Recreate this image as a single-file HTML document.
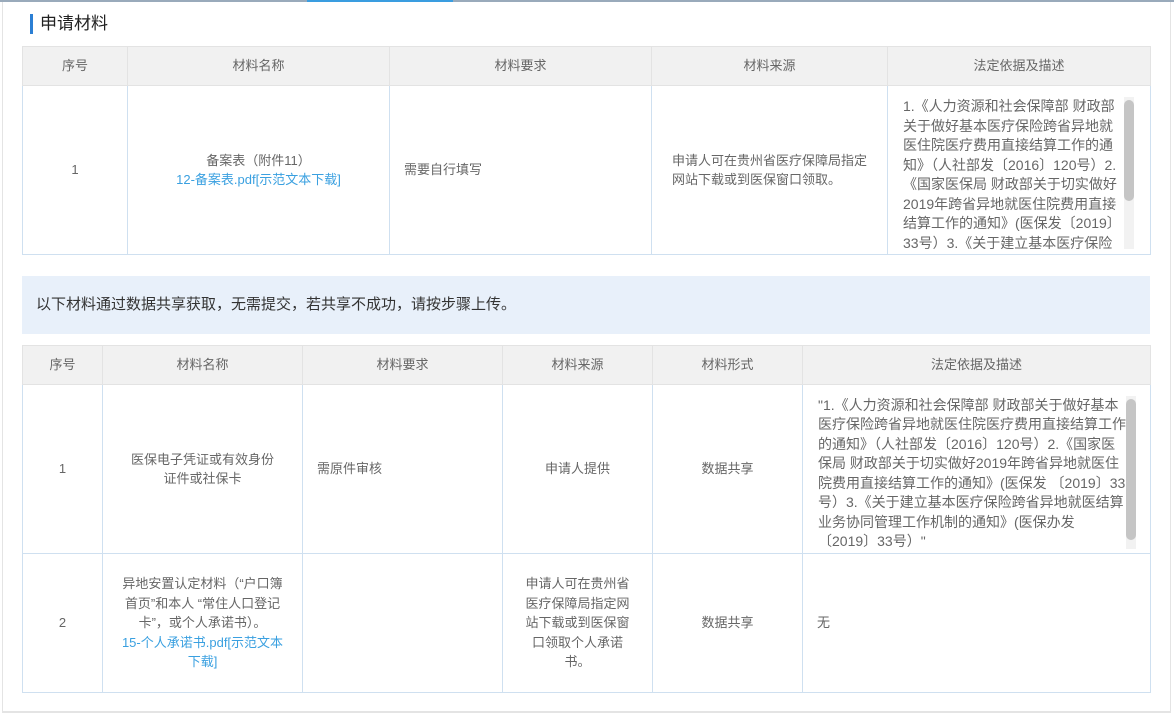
<!DOCTYPE html>
<html><head><meta charset="utf-8"><style>
*{margin:0;padding:0;box-sizing:border-box}
body{width:1174px;height:715px;background:#fff;font-family:"Liberation Sans","Noto Sans CJK SC",sans-serif;font-size:13px;color:#666;position:relative;overflow:hidden}
.top{position:absolute;left:0;top:0;width:1174px;height:2px;background:#9ab}
.topb{position:absolute;left:307px;top:0;width:146px;height:2px;background:#3a9de0}
.frame{position:absolute;left:2px;top:2px;width:1169px;height:711px;border-left:1px solid #e4e4e4;border-right:1px solid #e4e4e4;border-bottom:2px solid #e4e4e4}
h2{position:absolute;left:30px;top:14px;font-size:17px;font-weight:normal;color:#222;border-left:3px solid #2b7fd4;padding-left:7px;line-height:20px}
table{position:absolute;left:22px;border-collapse:collapse;table-layout:fixed}
td,th{border:1px solid #cfe0f0;text-align:center;vertical-align:middle;font-weight:normal;line-height:19.5px}
th{background:#f1f1f1;border-color:#e3e3e3;height:39px;color:#666}
a{color:#3aa0e0;text-decoration:none}
.l{text-align:left;padding-left:14px}
.sc{position:relative;overflow:hidden;text-align:left;font-size:14px;line-height:19.5px}
.sb{position:absolute;right:0;top:0;width:10px;background:#f2f2f2}
.sb i{position:absolute;left:0;width:10px;background:#c5c5c5;border-radius:5px}
.note{position:absolute;left:22px;top:276px;width:1128px;height:58px;background:#e8f0fa;font-size:15px;color:#333;line-height:58px;padding-left:14px}
</style></head><body>
<div class="top"></div><div class="topb"></div><div class="frame"></div>
<h2>申请材料</h2>
<table style="top:46px;width:1128px">
<colgroup><col style="width:105px"><col style="width:262px"><col style="width:262px"><col style="width:236px"><col style="width:263px"></colgroup>
<tr><th>序号</th><th>材料名称</th><th>材料要求</th><th>材料来源</th><th>法定依据及描述</th></tr>
<tr style="height:169px"><td>1</td><td>备案表（附件11）<br><a>12-备案表.pdf[示范文本下载]</a></td><td class="l">需要自行填写</td><td style="padding:0 20px;text-align:left">申请人可在贵州省医疗保障局指定网站下载或到医保窗口领取。</td>
<td style="padding:0"><div class="sc" style="height:152px;margin:6px 16px 0 15px;padding-right:12px"><div class="sb" style="height:152px"><i style="top:3px;height:101px"></i></div>1.《人力资源和社会保障部 财政部关于做好基本医疗保险跨省异地就医住院医疗费用直接结算工作的通知》（人社部发〔2016〕120号）2.《国家医保局 财政部关于切实做好2019年跨省异地就医住院费用直接结算工作的通知》(医保发〔2019〕33号）3.《关于建立基本医疗保险跨省异地就医结算业务协同管理工作机制的通知》</div></td></tr>
</table>
<div class="note">以下材料通过数据共享获取，无需提交，若共享不成功，请按步骤上传。</div>
<table style="top:345px;width:1128px">
<colgroup><col style="width:80px"><col style="width:200px"><col style="width:200px"><col style="width:150px"><col style="width:150px"><col style="width:348px"></colgroup>
<tr><th>序号</th><th>材料名称</th><th>材料要求</th><th>材料来源</th><th>材料形式</th><th>法定依据及描述</th></tr>
<tr style="height:169px"><td>1</td><td style="padding:0 24px">医保电子凭证或有效身份证件或社保卡</td><td class="l">需原件审核</td><td>申请人提供</td><td>数据共享</td>
<td style="padding:0"><div class="sc" style="height:153px;margin:6px 14px 0 15px;padding-right:10px"><div class="sb" style="height:153px"><i style="top:3px;height:141px"></i></div>"1.《人力资源和社会保障部 财政部关于做好基本医疗保险跨省异地就医住院医疗费用直接结算工作的通知》（人社部发〔2016〕120号）2.《国家医保局 财政部关于切实做好2019年跨省异地就医住院费用直接结算工作的通知》(医保发 〔2019〕33号）3.《关于建立基本医疗保险跨省异地就医结算业务协同管理工作机制的通知》(医保办发〔2019〕33号）"</div></td></tr>
<tr style="height:139px"><td>2</td><td style="padding:0 16px">异地安置认定材料（“户口簿首页”和本人 “常住人口登记卡”，或个人承诺书）。<br><a>15-个人承诺书.pdf[示范文本下载]</a></td><td></td><td style="padding:0 18px">申请人可在贵州省医疗保障局指定网站下载或到医保窗口领取个人承诺书。</td><td>数据共享</td><td class="l">无</td></tr>
</table>
</body></html>
